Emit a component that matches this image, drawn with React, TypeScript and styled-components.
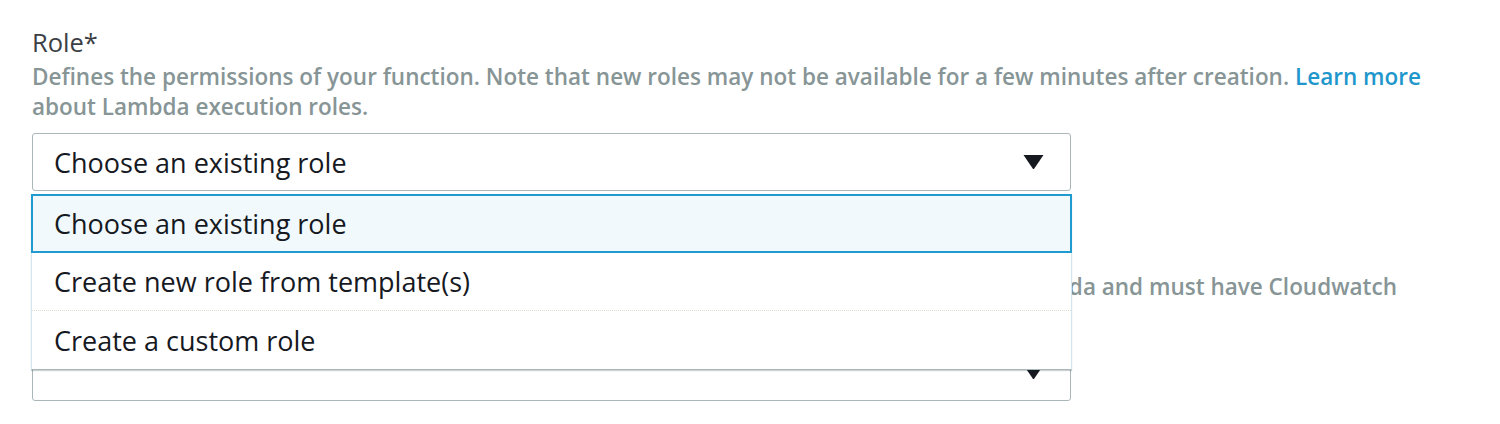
import React from "react";
import styled, { createGlobalStyle } from "styled-components";

const GlobalStyle = createGlobalStyle`
  html, body {
    margin: 0;
    padding: 0;
    background: #ffffff;
  }
  body {
    font-family: "Open Sans", "Liberation Sans", sans-serif;
    color: #16191f;
  }
`;

const options = [
  "Choose an existing role",
  "Create new role from template(s)",
  "Create a custom role",
];

const Caret = () => (
  <svg width="21" height="16" viewBox="0 0 21 16">
    <path d="M0.5 1 L20.5 1 L11.3 14.6 Q10.5 15.6 9.7 14.6 Z" fill="#16191f" />
  </svg>
);

const App = () => {
  return (
    <>
      <GlobalStyle />
      <Page>
        <Field>
          <Label>Role*</Label>
          <Help>
            Defines the permissions of your function. Note that new roles may
            not be available for a few minutes after creation.{" "}
            <Link href="#">Learn more</Link> about Lambda execution roles.
          </Help>
          <SelectWrap>
            <Select>
              <span>Choose an existing role</span>
              <Caret />
            </Select>
            <Menu>
              {options.map((o, i) => (
                <Option key={o} $selected={i === 0} $last={i === options.length - 1}>
                  {o}
                </Option>
              ))}
            </Menu>
          </SelectWrap>
        </Field>

        {/* field underneath the open menu */}
        <Field>
          <Label>Existing role*</Label>
          <Help>
            Choose an existing role to be used with this Lambda function. Role
            must be assumable by Lambda and must have Cloudwatch Logs
            permissions.
          </Help>
          <Select>
            <span />
            <Caret />
          </Select>
        </Field>
      </Page>
    </>
  );
};

export default App;

const Page = styled.div`
  padding: 25px 0 0 32px;
  width: 1400px;
  display: flex;
  flex-direction: column;
  gap: 44px;
`;

const Field = styled.div`
  display: flex;
  flex-direction: column;
`;

const Label = styled.div`
  font-size: 25.5px;
  line-height: 34px;
  color: #3b3f45;
`;

const Help = styled.div`
  font-size: 22.5px;
  line-height: 30px;
  font-weight: 600;
  color: #879596;
  margin-top: 3px;
  margin-bottom: 11px;
  max-width: 1400px;
`;

const Link = styled.a`
  color: #1f97cc;
  text-decoration: none;
`;

const SelectWrap = styled.div`
  position: relative;
  width: 1039px;
`;

const Select = styled.div`
  box-sizing: border-box;
  width: 1039px;
  height: 58px;
  border: 1px solid #aab7b8;
  border-radius: 3px;
  background: #ffffff;
  display: flex;
  align-items: center;
  justify-content: space-between;
  padding: 0 26px 0 21px;
  font-size: 27px;
  color: #16191f;
`;

const Menu = styled.div`
  position: absolute;
  top: 61px;
  left: -1px;
  width: 1041px;
  box-sizing: border-box;
  background: #ffffff;
  border: 1px solid #d3e6f0;
  border-top: none;
  border-bottom: 1px solid #aab7b8;
  box-shadow: 0 1px 1px rgba(0, 28, 36, 0.2);
  z-index: 2;
`;

const Option = styled.div<{ $selected?: boolean; $last?: boolean }>`
  box-sizing: border-box;
  height: ${(p) => (p.$selected ? "59px" : "58px")};
  display: flex;
  align-items: center;
  font-size: 27px;
  color: #16191f;
  margin: ${(p) => (p.$selected ? "0 -1px" : "0")};
  border: ${(p) => (p.$selected ? "2px solid #1f9bcf" : "none")};
  padding-left: ${(p) => (p.$selected ? "21px" : "22px")};
  background: ${(p) => (p.$selected ? "#f1f9fd" : "#ffffff")};
  border-bottom: ${(p) =>
    p.$selected ? "2px solid #1f9bcf" : p.$last ? "none" : "1px dotted #d9dfd3"};
`;
